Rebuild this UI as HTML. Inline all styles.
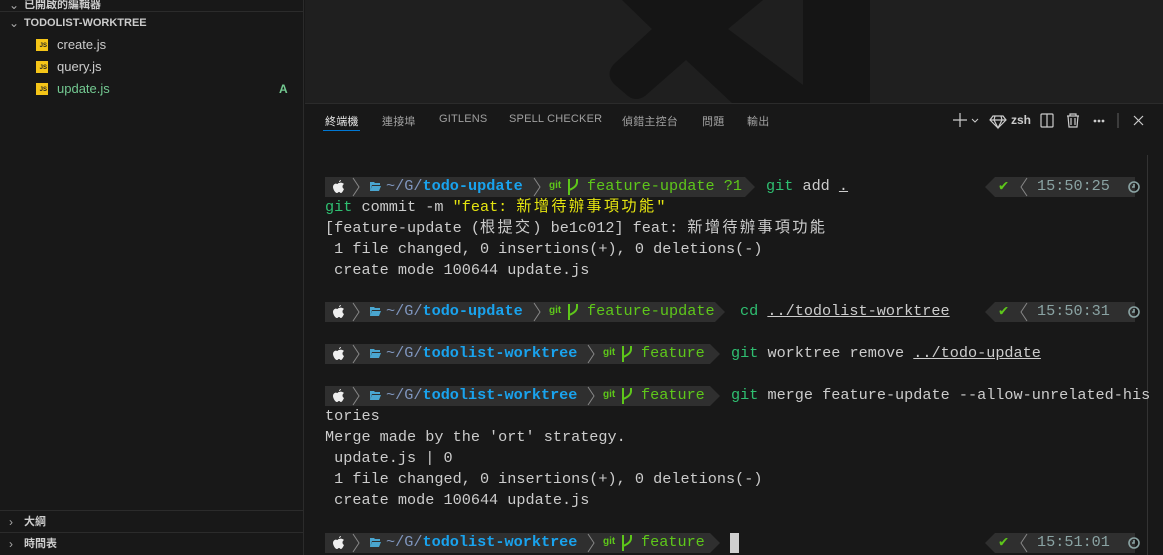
<!DOCTYPE html><html><head><meta charset="utf-8"><style>
*{margin:0;padding:0;box-sizing:border-box}
body{width:1163px;height:555px;background:#181818;overflow:hidden;position:relative;font-family:"Liberation Sans","Noto Sans CJK TC",sans-serif;color:#ccc}
.abs{position:absolute}
.side{left:0;top:0;width:304px;height:555px;background:#181818;border-right:1px solid #2b2b2b}
.sec{font-size:11px;font-weight:bold;color:#ccc;left:0;width:304px;height:22px;line-height:22px;padding-left:24px}
.chev{position:absolute;left:9px;top:0;font-weight:normal;color:#aaa;font-size:12px}
.file{left:36px;font-size:13px;height:22px;line-height:22px;color:#ccc;display:flex;align-items:center}
.js{width:12px;height:12px;background:#f5c518;color:#222;font-size:6px;font-weight:bold;line-height:14px;text-align:right;padding-right:1px;margin-right:9px}
.panel{left:305px;top:103px;width:858px;height:452px;background:#181818;border-top:1px solid #2b2b2b}
.tab{top:113px;font-size:11px;color:#a0a0a0;letter-spacing:.2px}
.t{position:absolute;font-family:"Liberation Mono","Noto Sans CJK TC",monospace;font-size:15.2px;line-height:21px;white-space:pre;color:#ccc}
.c{letter-spacing:2.3px}
.bar{position:absolute;height:20px;background:#2f2f2f}
.pb{color:#7f95bd}.pp{color:#19a3ee;font-weight:bold}.gr{color:#5ec71a}.cm{color:#2fbf71}.yl{color:#e5e510}.tm{color:#8aa3a3}
.gi{position:absolute;color:#5ec71a;font:bold 10px "Liberation Sans",sans-serif}
u{text-decoration:underline}
</style></head><body>
<div class="abs side">
 <div class="abs sec" style="top:-6px"><span class="chev">⌄</span>已開啟的編輯器</div>
 <div class="abs" style="left:0;top:11px;width:304px;border-top:1px solid #2b2b2b"></div>
 <div class="abs sec" style="top:12px"><span class="chev">⌄</span>TODOLIST-WORKTREE</div>
 <div class="abs file" style="top:34px"><span class="js">JS</span>create.js</div>
 <div class="abs file" style="top:56px"><span class="js">JS</span>query.js</div>
 <div class="abs file" style="top:78px;color:#73c991"><span class="js">JS</span>update.js</div>
 <div class="abs" style="left:279px;top:78px;font-size:12px;line-height:22px;color:#73c991;font-weight:bold">A</div>
 <div class="abs" style="left:0;top:510px;width:304px;border-top:1px solid #2b2b2b"></div>
 <div class="abs sec" style="top:511px"><span class="chev">›</span>大綱</div>
 <div class="abs" style="left:0;top:532px;width:304px;border-top:1px solid #2b2b2b"></div>
 <div class="abs sec" style="top:533px"><span class="chev">›</span>時間表</div>
</div>
<svg class="abs" style="left:0;top:0" width="1163" height="103">
 <rect x="305" y="0" width="858" height="103" fill="#1f1f1f"/>
 <rect x="600" y="0" width="270" height="103" fill="#151515"/>
 <path fill="#1f1f1f" d="M540 0L622 0L652 29L614 64Q605 74 614 84L628 96Q636 102 645 96L686 60L732 103L540 103Z"/>
 <path fill="#1f1f1f" d="M763 0L803 0L803 85L728 29Z"/>
</svg>
<div class="abs panel"></div>
<div class="abs tab" style="left:325px;color:#e7e7e7">終端機</div>
<div class="abs" style="left:323px;top:130px;width:37px;height:1px;background:#0078d4"></div>
<div class="abs tab" style="left:382px">連接埠</div>
<div class="abs tab" style="left:439px">GITLENS</div>
<div class="abs tab" style="left:509px">SPELL CHECKER</div>
<div class="abs tab" style="left:622px">偵錯主控台</div>
<div class="abs tab" style="left:702px">問題</div>
<div class="abs tab" style="left:747px">輸出</div>
<svg class="abs" style="left:950px;top:110px" width="200" height="22" fill="none" stroke="#ccc" stroke-width="1.2">
 <path d="M3 10h14M10 3v14"/><path d="M22 9l3 3 3-3" stroke-width="1"/>
 <path d="M43 6h10l3 4-8 8-8-8z M40 10h16 M45 6l-1 4 4 8 4-8-1-4"/>
 <rect x="91" y="4" width="12" height="13" rx="1"/><path d="M97 4v13"/>
 <path d="M117 6h12M120 6V4h6v2M118 6l1 11h8l1-11M121 8v7M125 8v7"/>
 <circle cx="145" cy="11" r=".8" fill="#ccc"/><circle cx="149" cy="11" r=".8" fill="#ccc"/><circle cx="153" cy="11" r=".8" fill="#ccc"/>
 <path d="M168 3v15" stroke="#555"/>
 <path d="M184 6l9 9M193 6l-9 9"/>
</svg>
<div class="abs" style="left:1011px;top:113px;font-size:12px;font-weight:bold;color:#ccc">zsh</div>
<div class="abs" style="left:1147px;top:155px;width:1px;height:400px;background:#333"></div>

<div class="bar" style="left:325px;top:177px;width:420px"></div>
<div class="bar" style="left:995px;top:177px;width:140px"></div>
<div class="bar" style="left:325px;top:302px;width:390px"></div>
<div class="bar" style="left:995px;top:302px;width:140px"></div>
<div class="bar" style="left:325px;top:344px;width:385px"></div>
<div class="bar" style="left:325px;top:386px;width:385px"></div>
<div class="bar" style="left:325px;top:533px;width:385px"></div>
<div class="bar" style="left:995px;top:533px;width:140px"></div>
<svg class="abs" style="left:0;top:0" width="1163" height="555">
 <g fill="#2f2f2f">
  <path d="M745 177l10 10-10 10z"/><path d="M715 302l10 10-10 10z"/>
  <path d="M710 344l10 10-10 10z"/><path d="M710 386l10 10-10 10z"/><path d="M710 533l10 10-10 10z"/>
  <path d="M995 177l-10 10 10 10z"/><path d="M995 302l-10 10 10 10z"/><path d="M995 533l-10 10 10 10z"/>
 </g>
 <g fill="none" stroke="#888" stroke-width="1">
  <path d="M353 178l6 9-6 9"/><path d="M1027 178l-6 9 6 9"/>
  <path d="M353 303l6 9-6 9"/><path d="M1027 303l-6 9 6 9"/>
  <path d="M353 345l6 9-6 9"/><path d="M353 387l6 9-6 9"/>
  <path d="M353 534l6 9-6 9"/><path d="M1027 534l-6 9 6 9"/>
  <path d="M534 178l6 9-6 9"/><path d="M534 303l6 9-6 9"/>
  <path d="M588 345l6 9-6 9"/><path d="M588 387l6 9-6 9"/><path d="M588 534l6 9-6 9"/>
 </g>
 <g fill="#eee">
  <path d="M339 183c2-1 4 0 5 1-2 1-2 4 0 5-1 2-2 4-3 4s-1-1-2-1-1 1-2 1c-2 0-4-4-4-6 0-3 3-4 4-3 1 0 1-1 2-1zM339 182c0-1 1-2 2-2 0 1-1 2-2 2z"/>
  <path d="M339 308c2-1 4 0 5 1-2 1-2 4 0 5-1 2-2 4-3 4s-1-1-2-1-1 1-2 1c-2 0-4-4-4-6 0-3 3-4 4-3 1 0 1-1 2-1zM339 307c0-1 1-2 2-2 0 1-1 2-2 2z"/>
  <path d="M339 350c2-1 4 0 5 1-2 1-2 4 0 5-1 2-2 4-3 4s-1-1-2-1-1 1-2 1c-2 0-4-4-4-6 0-3 3-4 4-3 1 0 1-1 2-1zM339 349c0-1 1-2 2-2 0 1-1 2-2 2z"/>
  <path d="M339 392c2-1 4 0 5 1-2 1-2 4 0 5-1 2-2 4-3 4s-1-1-2-1-1 1-2 1c-2 0-4-4-4-6 0-3 3-4 4-3 1 0 1-1 2-1zM339 391c0-1 1-2 2-2 0 1-1 2-2 2z"/>
  <path d="M339 539c2-1 4 0 5 1-2 1-2 4 0 5-1 2-2 4-3 4s-1-1-2-1-1 1-2 1c-2 0-4-4-4-6 0-3 3-4 4-3 1 0 1-1 2-1zM339 538c0-1 1-2 2-2 0 1-1 2-2 2z"/>
 </g>
 <g fill="#4aa6d0">
  <path d="M370 182h4l1 1h5v2h-8l-2 6z M372 186h9l-2 5h-9z"/>
  <path d="M370 307h4l1 1h5v2h-8l-2 6z M372 311h9l-2 5h-9z"/>
  <path d="M370 349h4l1 1h5v2h-8l-2 6z M372 353h9l-2 5h-9z"/>
  <path d="M370 391h4l1 1h5v2h-8l-2 6z M372 395h9l-2 5h-9z"/>
  <path d="M370 538h4l1 1h5v2h-8l-2 6z M372 542h9l-2 5h-9z"/>
 </g>
 <g fill="none" stroke="#5ec71a" stroke-width="2">
  <path d="M569 179v16M577 179v3q0 5-8 8"/>
  <path d="M569 304v16M577 304v3q0 5-8 8"/>
  <path d="M623 346v16M631 346v3q0 5-8 8"/>
  <path d="M623 388v16M631 388v3q0 5-8 8"/>
  <path d="M623 535v16M631 535v3q0 5-8 8"/>
 </g>
</svg>
<span class="gi" style="left:549px;top:180px">git</span>
<span class="gi" style="left:549px;top:305px">git</span>
<span class="gi" style="left:603px;top:347px">git</span>
<span class="gi" style="left:603px;top:389px">git</span>
<span class="gi" style="left:603px;top:536px">git</span>

<div class="t" style="left:386px;top:176px"><span class="pb">~/G/</span><span class="pp">todo-update</span></div>
<div class="t" style="left:587px;top:176px"><span class="gr">feature-update ?1</span></div>
<div class="t" style="left:766px;top:176px"><span class="cm">git</span> add <u>.</u></div>
<div class="t" style="left:325px;top:197px"><span class="cm">git</span> commit -m <span class="yl">"feat: <span class="c">新增待辦事項功能</span>"</span>
[feature-update (<span class="c">根提交</span>) be1c012] feat: <span class="c">新增待辦事項功能</span>
 1 file changed, 0 insertions(+), 0 deletions(-)
 create mode 100644 update.js</div>
<div class="t" style="left:386px;top:301px"><span class="pb">~/G/</span><span class="pp">todo-update</span></div>
<div class="t" style="left:587px;top:301px"><span class="gr">feature-update</span></div>
<div class="t" style="left:740px;top:301px"><span class="cm">cd</span> <u>../todolist-worktree</u></div>
<div class="t" style="left:386px;top:343px"><span class="pb">~/G/</span><span class="pp">todolist-worktree</span></div>
<div class="t" style="left:641px;top:343px"><span class="gr">feature</span></div>
<div class="t" style="left:731px;top:343px"><span class="cm">git</span> worktree remove <u>../todo-update</u></div>
<div class="t" style="left:386px;top:385px"><span class="pb">~/G/</span><span class="pp">todolist-worktree</span></div>
<div class="t" style="left:641px;top:385px"><span class="gr">feature</span></div>
<div class="t" style="left:731px;top:385px"><span class="cm">git</span> merge feature-update --allow-unrelated-his</div>
<div class="t" style="left:325px;top:406px">tories
Merge made by the 'ort' strategy.
 update.js | 0
 1 file changed, 0 insertions(+), 0 deletions(-)
 create mode 100644 update.js</div>
<div class="t" style="left:386px;top:532px"><span class="pb">~/G/</span><span class="pp">todolist-worktree</span></div>
<div class="t" style="left:641px;top:532px"><span class="gr">feature</span></div>
<div class="abs" style="left:730px;top:533px;width:9px;height:20px;background:#d0d0d0"></div>
<div class="t" style="left:999px;top:176px"><span class="gr">✔</span></div><div class="t" style="left:1037px;top:176px"><span class="tm">15:50:25</span></div>
<div class="t" style="left:999px;top:301px"><span class="gr">✔</span></div><div class="t" style="left:1037px;top:301px"><span class="tm">15:50:31</span></div>
<div class="t" style="left:999px;top:532px"><span class="gr">✔</span></div><div class="t" style="left:1037px;top:532px"><span class="tm">15:51:01</span></div>
<svg class="abs" style="left:1120px;top:0" width="20" height="555" fill="none" stroke="#8aa3a3" stroke-width="1.6">
 <circle cx="14" cy="187" r="5"/><path d="M14 184v3h-2"/>
 <circle cx="14" cy="312" r="5"/><path d="M14 309v3h-2"/>
 <circle cx="14" cy="543" r="5"/><path d="M14 540v3h-2"/>
</svg>
</body></html>
